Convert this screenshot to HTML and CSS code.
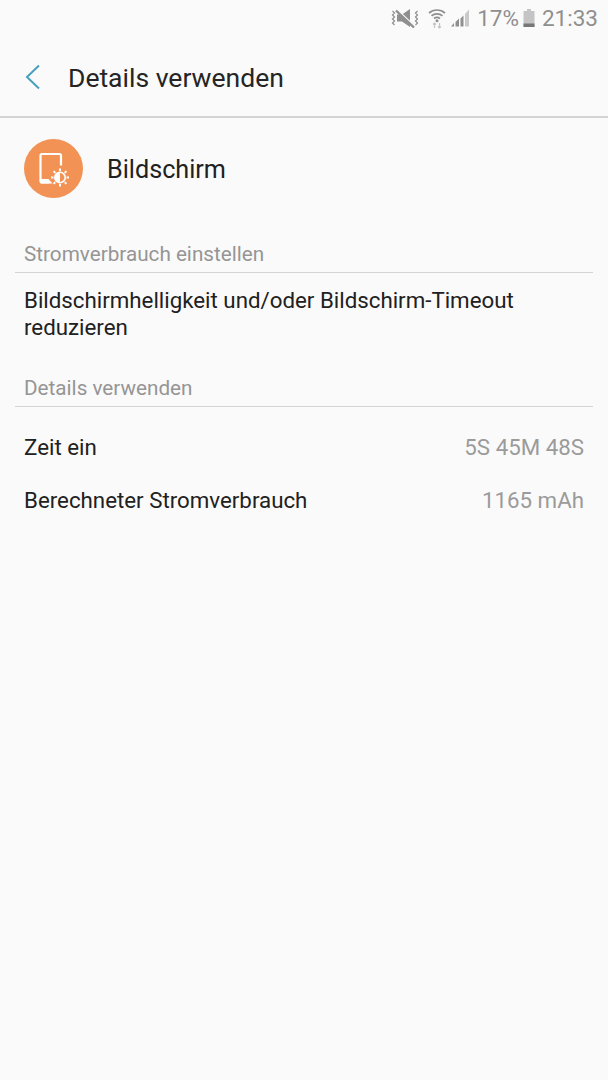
FILE: index.html
```html
<!DOCTYPE html>
<html lang="de">
<head>
<meta charset="utf-8">
<title>Details verwenden</title>
<link rel="stylesheet" href="styles.css">
</head>
<body>
<div class="status">
  <svg class="i-mute" width="28" height="20" viewBox="0 0 28 20"><path d="M1.500 3l2 2-2 2 2 2-2 2 2 2-2 2 2 2M26.500 3l-2 2 2 2-2 2 2 2-2 2 2 2-2 2" fill="none" stroke="#8f8f8f" stroke-width="1.200"/><path d="M6 6.500h5L19 1v18l-8-5.500H6z" fill="#8f8f8f"/><path d="M5 0.500l18 17" stroke="#fafafa" stroke-width="1.500"/><path d="M5 2.500l18 17" stroke="#8f8f8f" stroke-width="2.400"/></svg>
  <svg class="i-wifi" width="18" height="22" viewBox="0 0 18 22"><path d="M1 6c4.500-4 11.500-4 16 0M3.500 8.800c3-2.700 8-2.700 11 0M6 11.500c1.700-1.400 4.300-1.400 6 0" fill="none" stroke="#8f8f8f" stroke-width="1.700"/><circle cx="9" cy="13.800" r="1.500" fill="#8f8f8f"/><path d="M6.500 16v5M5 17.500 6.500 16 8 17.500M11.500 21v-5M10 19.500l1.500 1.500 1.500-1.500" fill="none" stroke="#c4c4c4" stroke-width="1.200"/></svg>
  <svg class="i-signal" width="19" height="20" viewBox="0 0 19 20"><path d="M0 18.500h3v-3.500zM4.500 18.500h3.500v-8l-3.500 3.500z" fill="#8f8f8f"/><path d="M9.500 18.500H12.500V7.500l-3 3z" fill="#8f8f8f"/><path d="M14 18.500H18V1.500l-4 4.500z" fill="#c9c9c9"/></svg>
  <span class="pct">17%</span>
  <svg class="i-batt" width="12" height="20" viewBox="0 0 12 20"><path d="M4 1h4v2h3.500v16H.5V3H4z" fill="#c4c4c4"/><rect x=".5" y="15.500" width="11" height="3.500" fill="#777"/></svg>
  <span class="time">21:33</span>
</div>
<header class="bar">
  <svg class="back" width="16" height="26" viewBox="0 0 16 26"><path d="M14 1.500 2 13l12 11.500" fill="none" stroke="#4a9fbd" stroke-width="2"/></svg>
  <h1 class="title">Details verwenden</h1>
</header>
<main class="content">
  <div class="app">
    <div class="app-icon">
      <svg width="59" height="59" viewBox="0 0 59 59"><path d="M25 43.500h-7a1.500 1.500 0 0 1-1.500-1.500V16.500A1.500 1.500 0 0 1 18 15h17.500a1.500 1.500 0 0 1 1.500 1.500v10" fill="none" stroke="#fff" stroke-width="2.200"/><path d="M17 40h7.500l4 4.500H17z" fill="#fff"/><g stroke="#fff" stroke-width="2"><path d="M36 29.500v18M27 38.500h18M29.600 32.100l12.800 12.800M42.400 32.100 29.600 44.900"/></g><circle cx="36" cy="38.500" r="6.600" fill="#f29355"/><circle cx="36" cy="38.500" r="5.200" fill="none" stroke="#fff" stroke-width="1.600"/><path d="M36 33.300a5.200 5.200 0 0 0 0 10.400z" fill="#fff"/></svg>
    </div>
    <span class="app-name">Bildschirm</span>
  </div>
  <section class="group first">
    <h2 class="group-title">Stromverbrauch einstellen</h2>
    <p class="tip">Bildschirmhelligkeit und/oder Bildschirm-Timeout reduzieren</p>
  </section>
  <section class="group second">
    <h2 class="group-title">Details verwenden</h2>
    <div class="rows">
      <div class="row"><span>Zeit ein</span><span class="val">5S 45M 48S</span></div>
      <div class="row"><span>Berechneter Stromverbrauch</span><span class="val">1165 mAh</span></div>
    </div>
  </section>
</main>
</body>
</html>
```

FILE: styles.css
```css
* { box-sizing: border-box; }
html, body { margin: 0; padding: 0; }
body {
  width: 608px;
  height: 1080px;
  background: #fafafa;
  color: #212121;
  font-family: Roboto, sans-serif;
  overflow: hidden;
}
.status {
  height: 36px;
  display: flex;
  align-items: center;
  justify-content: flex-end;
  padding-right: 10px;
  color: #8f8f8f;
}
.i-mute { margin-right: 9px; }
.i-wifi { margin-right: 5px; }
.i-signal { margin-right: 7px; }
.pct { font-size: 22.500px; margin-right: 4px; }
.i-batt { margin-right: 7px; }
.time { font-size: 22.500px; }
.bar {
  height: 82px;
  display: flex;
  align-items: center;
  padding: 0 0 0 25px;
  border-bottom: 2px solid #d4d4d4;
}
.back { margin-right: 27px; margin-top: 1px; }
.title { margin: 2px 0 0; font-size: 26.500px; font-weight: 400; color: #252525; }
.content { padding: 0 15px; }
.app { height: 103px; display: flex; align-items: center; padding-left: 9px; }
.app-icon {
  width: 59px; height: 59px; border-radius: 50%;
  background: #f29355; margin: -2px 24px 0 0; flex: none;
}
.app-icon svg { display: block; }
.app-name { font-size: 25.200px; color: #212121; }
.group-title {
  margin: 0;
  padding: 0 0 6px 9px;
  height: 32px;
  line-height: 26px;
  font-size: 20.700px;
  font-weight: 400;
  color: #959595;
  border-bottom: 1px solid #d4d4d4;
}
.first { margin-top: 20px; }
.second { margin-top: 34px; }
.tip { margin: 14px 0 0; padding: 0 9px; font-size: 22.300px; line-height: 27px; color: #212121; }
.rows { padding-top: 13px; }
.row {
  height: 53px;
  display: flex;
  align-items: center;
  justify-content: space-between;
  padding: 0 9px;
  font-size: 22.300px;
}
.val { color: #9b9b9b; }
```
